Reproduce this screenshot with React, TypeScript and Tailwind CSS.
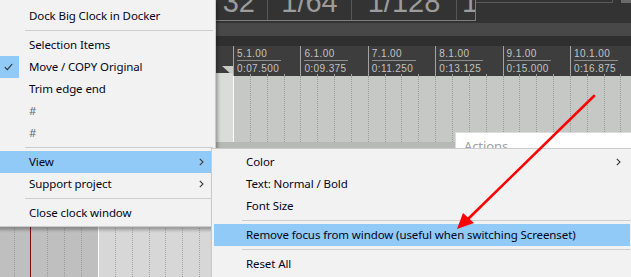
import React from "react";

type MenuEntry =
  | { sep: true }
  | { label: string; checked?: boolean; hl?: boolean; arrow?: boolean; muted?: boolean };

const mainMenu: MenuEntry[] = [
  { label: "Dock Big Clock in Docker" },
  { sep: true },
  { label: "Selection Items" },
  { label: "Move / COPY Original", checked: true },
  { label: "Trim edge end" },
  { label: "#", muted: true },
  { label: "#", muted: true },
  { sep: true },
  { label: "View", hl: true, arrow: true },
  { label: "Support project", arrow: true },
  { sep: true },
  { label: "Close clock window" },
];

const viewMenu: MenuEntry[] = [
  { label: "Color", arrow: true },
  { label: "Text: Normal / Bold" },
  { label: "Font Size" },
  { sep: true },
  { label: "Remove focus from window (useful when switching Screenset)", hl: true },
  { sep: true },
  { label: "Reset All" },
];

const markers = [
  ["5.1.00", "0:07.500"],
  ["6.1.00", "0:09.375"],
  ["7.1.00", "0:11.250"],
  ["8.1.00", "0:13.125"],
  ["9.1.00", "0:15.000"],
  ["10.1.00", "0:16.875"],
  ["11.1.00", "0:18.750"],
];

function Chevron() {
  return (
    <svg width="5" height="8" viewBox="0 0 5 8" className="mr-[9px] flex-none">
      <path d="M0.8 0.8 L4 4 L0.8 7.2" fill="none" stroke="#3c3c3c" strokeWidth="1.1" />
    </svg>
  );
}

function MenuRows({ items }: { items: MenuEntry[] }) {
  return (
    <>
      {items.map((it, i) =>
        "sep" in it ? (
          <div key={i} className="mx-[2px] h-[7px] flex items-center">
            <div className="ml-[28px] h-px flex-1 bg-[#cdcdcd]" />
          </div>
        ) : (
          <div
            key={i}
            className={`mx-[2px] h-[22px] flex items-center ${it.hl ? "bg-[#91c9f7]" : ""}`}
          >
            <div
              className={`w-[22px] h-[22px] flex-none flex items-center justify-center ${
                it.checked ? "bg-[#91c9f7]" : ""
              }`}
            >
              {it.checked && (
                <svg width="9" height="8" viewBox="0 0 9 8">
                  <path d="M0.8 4.2 L3.3 6.6 L8.2 1" fill="none" stroke="#2b2b2b" strokeWidth="1.1" />
                </svg>
              )}
            </div>
            <span
              className={`ml-[10px] flex-1 whitespace-nowrap ${
                it.muted ? "text-[#707070]" : "text-[#05051a]"
              }`}
            >
              {it.label}
            </span>
            {it.arrow && <Chevron />}
          </div>
        )
      )}
    </>
  );
}

function GridCells({ count, line = "border-[#9b9d9b]" }: { count: number; line?: string }) {
  return (
    <>
      {Array.from({ length: count }).map((_, i) => (
        <div key={i} className={`w-[16.85px] flex-none border-r border-dotted ${line}`} />
      ))}
    </>
  );
}

export default function App() {
  return (
    <div className="relative w-[631px] h-[277px] overflow-hidden bg-[#333333] flex flex-col [font-family:'Noto_Sans','Liberation_Sans',sans-serif] text-[11.5px] tracking-[-0.1px]">
      {/* big clock strip */}
      <div className="h-[23px] flex-none flex">
        <div className="flex h-[21px] border-b border-r border-[#7c7c7c] overflow-hidden text-[#9c9c9c] [font-family:'Liberation_Sans',sans-serif] text-[29px] leading-[29px] tracking-normal">
          <div className="w-[268px] flex-none flex justify-end pr-[12px] border-r border-[#575757]">
            <span className="-mt-[12px]">32</span>
          </div>
          <div className="w-[84px] flex-none flex justify-center border-r border-[#575757]">
            <span className="-mt-[12px]">1/64</span>
          </div>
          <div className="w-[105px] flex-none flex justify-center border-r border-[#575757]">
            <span className="-mt-[12px]">1/128</span>
          </div>
          <div className="w-[20px] flex-none pl-[5px] overflow-hidden whitespace-nowrap">
            <span className="-mt-[12px] block">1/256</span>
          </div>
        </div>
        <div className="flex-1 flex">
          <div className="w-[137px] h-[3px] border-b border-r border-[#5a5a5a]" />
          <div className="ml-[8px] w-[10px] h-[3px] bg-[#6a6a6a]" />
        </div>
      </div>
      <div className="h-[13px] flex-none bg-[#484848]" />
      <div className="h-[10px] flex-none bg-[#2f2f2f]" />

      {/* ruler */}
      <div className="h-[30px] flex-none flex bg-[#3d3d3d] text-[#c3c3c3] [font-family:'Liberation_Sans',sans-serif] text-[10px] tracking-[0.4px]">
        <div className="w-[216px] flex-none" />
        <div className="w-[17px] flex-none flex flex-col justify-end">
          <svg width="17" height="10" viewBox="0 0 17 10">
            <polygon points="6,0 17,0 17,10" fill="#c8cac8" />
            <rect x="0" y="7" width="17" height="3" fill="#dadcda" />
          </svg>
        </div>
        {markers.map(([bar, time]) => (
          <div key={bar} className="w-[67.4px] flex-none h-full border-l border-[#a3a3a3] flex flex-col">
            <div className="pl-[3px] pt-[2px]">
              <div className="w-[44px] border-b border-[#8e8e8e] leading-[12px]">{bar}</div>
              <div className="leading-[11px] pt-[2px]">{time}</div>
            </div>
            <div className="mt-auto h-[4px] flex">
              <GridCells count={3} line="border-solid border-[#a3a3a3]" />
            </div>
          </div>
        ))}
      </div>

      {/* upper track */}
      <div className="h-[66px] flex-none flex bg-[#c6c8c6]">
        <div className="w-[216px] flex-none" />
        <div className="w-[17px] flex-none bg-[#dadcda]" />
        <div className="w-px flex-none bg-white" />
        <GridCells count={24} />
      </div>
      <div className="h-[6px] flex-none bg-[#b7b9b7]" />

      {/* lower track */}
      <div className="flex-1 flex">
        <div className="w-[98px] flex-none flex bg-[#bfbfbf]">
          <div className="w-[13.5px] flex-none" />
          {Array.from({ length: 5 }).map((_, i) => (
            <div
              key={i}
              className={`w-[16.85px] flex-none border-l ${
                i === 1 ? "border-solid border-[#7a0e0e]" : "border-dotted border-[#9a9a9a]"
              }`}
            />
          ))}
        </div>
        <div className="w-px flex-none bg-white" />
        <div className="flex-1 flex bg-[#d6d7d6]">
          <GridCells count={8} line="border-[#a6a6a6]" />
        </div>
      </div>

      {/* Actions window behind the submenu */}
      <div className="absolute left-[455px] top-[132px] w-[190px] h-[80px] bg-white border-l border-t border-[#dcdcdc]">
        <div className="pl-[8px] pt-[4px] text-[13px] text-[#a0a0a0]">Actions</div>
      </div>

      {/* clock context menu */}
      <div className="absolute left-[-6px] top-[-1px] w-[222px] bg-[#f2f2f2] border border-[#cbcbcb] pt-[5px] pb-[2px] shadow-[2px_3px_3px_rgba(0,0,0,0.28)]">
        <MenuRows items={mainMenu} />
      </div>

      {/* View submenu */}
      <div className="absolute left-[211px] top-[148px] w-[422px] bg-[#f2f2f2] border border-[#cbcbcb] pt-[2px] pb-[4px] shadow-[2px_3px_3px_rgba(0,0,0,0.28)]">
        <MenuRows items={viewMenu} />
      </div>

      {/* annotation arrow */}
      <svg className="absolute inset-0 pointer-events-none" width="631" height="277" viewBox="0 0 631 277">
        <line x1="594" y1="96" x2="466" y2="221" stroke="#ff0000" strokeWidth="2.6" strokeLinecap="round" />
        <polygon points="457,229 463,213 474,223" fill="#ff0000" />
      </svg>
    </div>
  );
}
